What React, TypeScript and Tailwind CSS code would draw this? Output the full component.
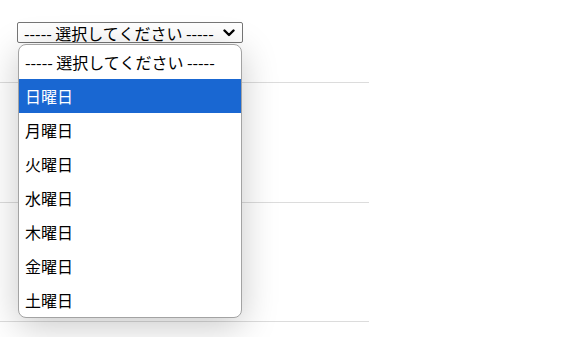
import React from "react";

const days = ["日曜日", "月曜日", "火曜日", "水曜日", "木曜日", "金曜日", "土曜日"];
const placeholder = "----- 選択してください -----";

const App = () => {
    return (
        <div className="relative h-[337px] w-[587px] overflow-hidden bg-white text-black [font-family:'Noto_Sans_CJK_JP',sans-serif]">
            {/* closed select box */}
            <div className="pl-[17px] pt-[22px]">
                <div className="flex h-[21px] w-[226px] items-center justify-between rounded-[2px] border border-[#767676] bg-white pl-[6px] pr-[6px] text-[16px] leading-none">
                    <span>{placeholder}</span>
                    <svg width="12" height="8" viewBox="0 0 12 8" className="mr-[1px]">
                        <path d="M1.5 1.5 L6 6 L10.5 1.5" fill="none" stroke="#000" strokeWidth="2.4" strokeLinecap="round" strokeLinejoin="round" />
                    </svg>
                </div>
            </div>

            {/* rows behind the dropdown */}
            <div className="w-[369px]">
                <div className="h-[40px] border-b border-[#dcdcdc]" />
                <div className="h-[120px] border-b border-[#dcdcdc]" />
                <div className="h-[119px] border-b border-[#dcdcdc]" />
            </div>

            {/* open option list */}
            <div className="absolute left-[18px] top-[44px] w-[224px] overflow-hidden rounded-[8px] border border-[#a3a3a3] bg-white shadow-[0_8px_36px_rgba(0,0,0,0.22)]">
                <div className="flex h-[34px] items-center pl-[6px] text-[16px]">{placeholder}</div>
                {days.map((d, i) => (
                    <div
                        key={d}
                        className={
                            i === 0
                                ? "flex h-[34px] items-center bg-[#1967d2] pl-[6px] text-[16px] text-white"
                                : "flex h-[34px] items-center pl-[6px] text-[16px]"
                        }
                    >
                        {d}
                    </div>
                ))}
            </div>
        </div>
    );
};

export default App;
